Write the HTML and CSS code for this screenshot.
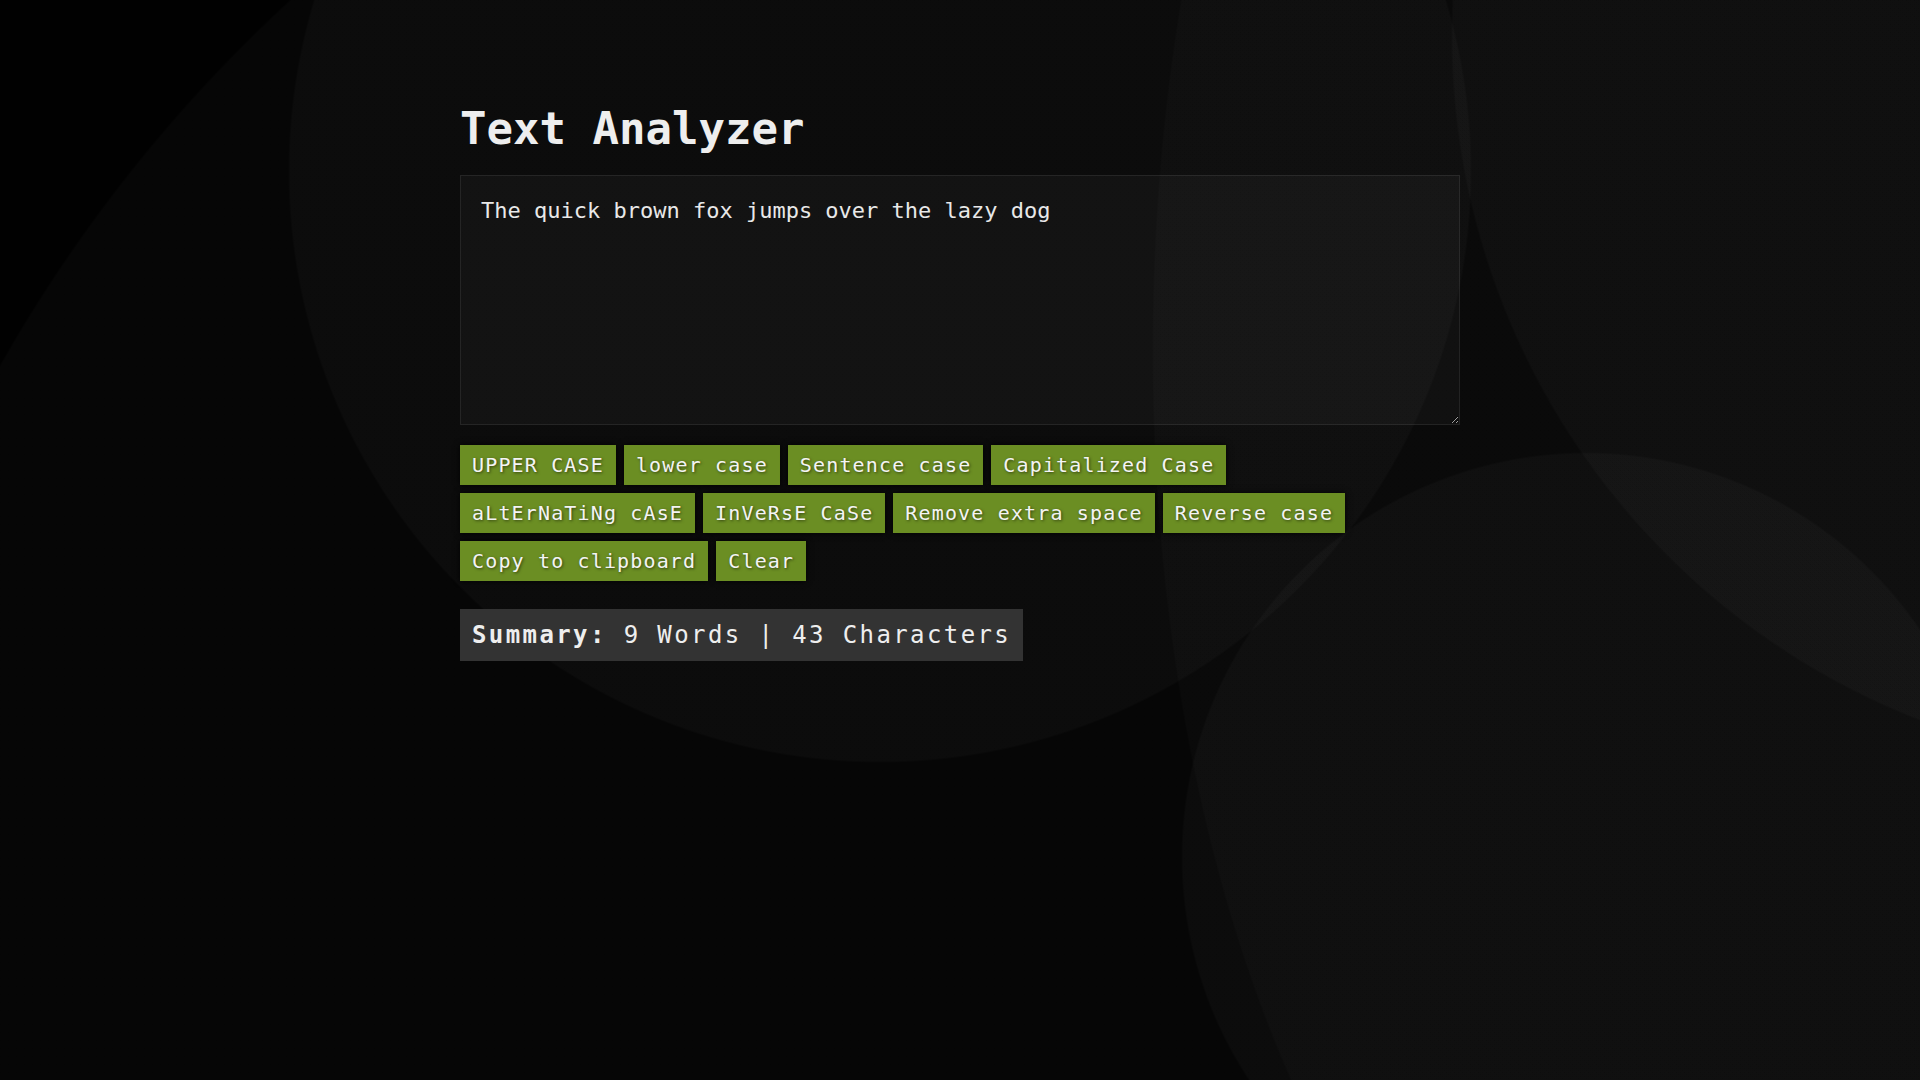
FILE: index.html
```html
<!DOCTYPE html>
<html lang="en">
<head>
<meta charset="utf-8">
<title>Text Analyzer</title>
<link rel="stylesheet" href="styles.css">
</head>
<body>
  <main class="container">
    <h1 class="title">Text Analyzer</h1>
    <textarea class="input" spellcheck="false">The quick brown fox jumps over the lazy dog</textarea>
    <div class="actions">
      <button class="btn">UPPER CASE</button>
      <button class="btn">lower case</button>
      <button class="btn">Sentence case</button>
      <button class="btn">Capitalized Case</button>
      <button class="btn">aLtErNaTiNg cAsE</button>
      <button class="btn">InVeRsE CaSe</button>
      <button class="btn">Remove extra space</button>
      <button class="btn">Reverse case</button>
      <button class="btn">Copy to clipboard</button>
      <button class="btn">Clear</button>
    </div>
    <div class="summary"><strong>Summary:</strong> 9 Words | 43 Characters</div>
  </main>
</body>
</html>
```

FILE: styles.css
```css
html, body {
  margin: 0;
  padding: 0;
  height: 100%;
}

body {
  font-family: "DejaVu Sans Mono", "Liberation Mono", monospace;
  color: #eeeeee;
  background-color: #010101;
  background-image:
    radial-gradient(circle 405px at 1586px 857px, rgba(255,255,255,0.022) 403px, rgba(255,255,255,0) 405px),
    radial-gradient(circle 735px at 2186px 36px, rgba(255,255,255,0.022) 733px, rgba(255,255,255,0) 735px),
    radial-gradient(ellipse 548px 1100px at 1700px 350px, rgba(255,255,255,0.016) 99.7%, rgba(255,255,255,0) 100%),
    radial-gradient(circle 592px at 880px 171px, rgba(255,255,255,0.022) 590px, rgba(255,255,255,0) 592px),
    radial-gradient(circle 1494px at 1300px 1100px, rgba(255,255,255,0.02) 1492px, rgba(255,255,255,0) 1494px);
  background-repeat: no-repeat;
}

.container {
  width: 1000px;
  margin: 0 auto;
  padding-top: 103px;
}

.title {
  margin: 0 0 20px;
  font-size: 44px;
  line-height: 52px;
  font-weight: bold;
  color: #eeeeee;
}

.input {
  display: block;
  box-sizing: border-box;
  width: 1000px;
  height: 250px;
  margin: 0;
  padding: 22px 20px;
  border: 1px solid rgba(255,255,255,0.08);
  border-radius: 0;
  background: rgba(255,255,255,0.03);
  color: #e8e8e8;
  font-family: "DejaVu Sans Mono", "Liberation Mono", monospace;
  font-size: 22px;
  line-height: 26px;
  outline: none;
}

.actions {
  display: flex;
  flex-wrap: wrap;
  gap: 8px;
  max-width: 980px;
  margin-top: 20px;
}

.btn {
  height: 40px;
  margin: 0;
  padding: 0 12px;
  border: none;
  border-radius: 0;
  background: #6b8e23;
  color: #f4f4f4;
  font-family: "DejaVu Sans Mono", "Liberation Mono", monospace;
  font-size: 20px;
  line-height: 40px;
  letter-spacing: 1.15px;
  text-shadow: 1px 1px 3px rgba(0,0,0,0.55);
  box-shadow: 0 0 6px rgba(0,0,0,0.9);
  cursor: pointer;
}

.summary {
  display: inline-block;
  margin-top: 28px;
  height: 52px;
  padding: 0 12px;
  background: #333333;
  color: #eeeeee;
  font-size: 24px;
  line-height: 52px;
  letter-spacing: 2.4px;
  white-space: nowrap;
}

.summary strong {
  font-weight: bold;
}
```
